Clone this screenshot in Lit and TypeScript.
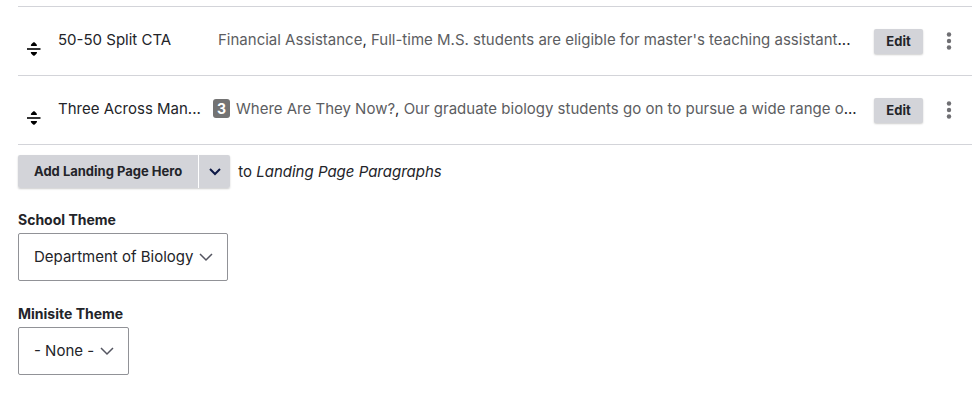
import { LitElement, html, css, nothing } from "lit";
import { customElement } from "lit/decorators.js";

interface Paragraph {
  type: string;
  count?: number;
  summary: string[];
}

const paragraphs: Paragraph[] = [
  {
    type: "50-50 Split CTA",
    summary: [
      "Financial Assistance",
      "Full-time M.S. students are eligible for master's teaching assistant",
    ],
  },
  {
    type: "Three Across Man...",
    count: 3,
    summary: [
      "Where Are They Now?",
      "Our graduate biology students go on to pursue a wide range o",
    ],
  },
];

@customElement("app-root")
export class AppRoot extends LitElement {
  static styles = css`
    :host {
      display: block;
      padding: 6px 0 8px 18px;
      background: #fff;
      color: #232429;
      font-family: Inter, "Liberation Sans", sans-serif;
      font-size: 15px;
      line-height: 24px;
    }
    * {
      box-sizing: border-box;
    }
    button,
    select {
      margin: 0;
      border: 0;
      color: inherit;
      cursor: pointer;
    }
    .rows {
      margin: 0;
      padding: 0;
      list-style: none;
      border-top: 1px solid #d3d4d9;
    }
    .row {
      display: flex;
      align-items: center;
      height: 69px;
      padding: 0 13px 2px 8px;
      border-bottom: 1px solid #d3d4d9;
    }
    .handle {
      display: flex;
      width: 32px;
      padding: 18px 0 0;
      background: none;
      cursor: move;
    }
    .type,
    .summary {
      overflow: hidden;
      white-space: nowrap;
      text-overflow: ellipsis;
    }
    .type {
      flex: 0 0 147px;
      margin-right: 8px;
    }
    .summary {
      flex: 1;
      min-width: 0;
      padding-left: 5px;
    }
    .summary.counted {
      padding-left: 0;
    }
    .content {
      color: #5c5d61;
    }
    .count {
      display: inline-block;
      width: 17px;
      margin-right: 6px;
      border-radius: 3px;
      background: #737373;
      color: #fff;
      font-size: 14px;
      font-weight: bold;
      line-height: 19px;
      text-align: center;
    }
    .edit,
    .add,
    .toggle {
      background: #d3d4d9;
      font: bold 13px/16px Inter, sans-serif;
    }
    .edit,
    .split {
      border-radius: 2px;
      box-shadow: 0 1px 2px rgba(0, 0, 0, 0.2);
    }
    .edit {
      width: 49px;
      height: 25px;
      margin: 2px 16px 0 6px;
      padding: 0 0 1px;
    }
    .more {
      display: flex;
      justify-content: center;
      width: 20px;
      margin-top: 2px;
      padding: 0;
      background: none;
    }
    .adder {
      display: flex;
      align-items: center;
      margin: 10px 0 22px;
    }
    .split {
      display: flex;
      gap: 1px;
      height: 33px;
      margin-right: 8px;
      background: #fff;
    }
    .add {
      padding: 0 16px 2px;
      border-radius: 2px 0 0 2px;
    }
    .toggle {
      display: flex;
      align-items: center;
      justify-content: center;
      width: 31px;
      padding: 0;
      border-radius: 0 2px 2px 0;
    }
    .field {
      display: flex;
      flex-direction: column;
      align-items: flex-start;
      margin-bottom: 23px;
    }
    .label {
      margin-bottom: 3px;
      font-size: 14px;
      font-weight: bold;
      line-height: 20px;
    }
    .picker {
      display: grid;
      align-items: center;
    }
    .picker > * {
      grid-area: 1 / 1;
    }
    .select {
      appearance: none;
      height: 48px;
      padding: 0 33px 0 15px;
      border: 1px solid #919297;
      border-radius: 2px;
      background: #fff;
      font: inherit;
    }
    .chevron {
      justify-self: end;
      margin-right: 15px;
      pointer-events: none;
    }
  `;

  private renderRow(p: Paragraph) {
    return html`<li class="row">
      <button class="handle" aria-label="Drag to re-order">
        <svg width="16" height="16" viewBox="0 0 16 16">
          <path d="M1 7h13.500v2H1z" fill="#333" />
          <path
            d="M8 1.200c.7 0 3 2.300 3 3.100 0 .6-.4.700-.8.700H5.600c-.4 0-.8-.1-.8-.7 0-.8 2.400-3.100 3.200-3.100zM8 14.800c.7 0 3-2.300 3-3.100 0-.6-.4-.7-.8-.7H5.600c-.4 0-.8.1-.8.700 0 .8 2.400 3.100 3.200 3.100z"
            fill="#000"
          />
        </svg>
      </button>
      <div class="type">${p.type}</div>
      <div class="summary ${p.count ? "counted" : ""}">${p.count
          ? html`<span class="count">${p.count}</span>`
          : nothing}${p.summary.map(
          (s, i) => html`${i ? ", " : ""}<span class="content">${s}</span>`
        )}...</div>
      <button class="edit">Edit</button>
      <button class="more" aria-label="Toggle actions">
        <svg width="6" height="18" viewBox="0 0 6 18" fill="#6f6f73">
          <circle cx="3" cy="2.500" r="2.200" />
          <circle cx="3" cy="9" r="2.200" />
          <circle cx="3" cy="15.500" r="2.200" />
        </svg>
      </button>
    </li>`;
  }

  private renderField(id: string, label: string, value: string) {
    return html`<div class="field">
      <label class="label" for=${id}>${label}</label>
      <div class="picker">
        <select class="select" id=${id}>
          <option>${value}</option>
        </select>
        <svg class="chevron" width="14" height="9" viewBox="0 0 14 9">
          <path d="M1 1l6 6 6-6" fill="none" stroke="#545560" stroke-width="1.500" />
        </svg>
      </div>
    </div>`;
  }

  render() {
    return html`
      <ul class="rows">
        ${paragraphs.map((p) => this.renderRow(p))}
      </ul>
      <div class="adder">
        <div class="split">
          <button class="add">Add Landing Page Hero</button>
          <button class="toggle" aria-label="List additional actions">
            <svg width="14" height="9" viewBox="0 0 14 9">
              <path d="M2 2l5 5 5-5" fill="none" stroke="#0c1845" stroke-width="2" />
            </svg>
          </button>
        </div>
        <span>to <em>Landing Page Paragraphs</em></span>
      </div>
      ${this.renderField("school-theme", "School Theme", "Department of Biology")}
      ${this.renderField("minisite-theme", "Minisite Theme", "- None -")}
    `;
  }
}
